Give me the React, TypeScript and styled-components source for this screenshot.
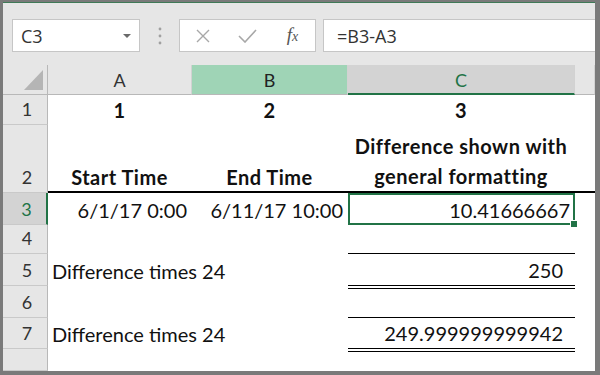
import React from 'react';
import styled, { createGlobalStyle, css } from 'styled-components';

const GREEN = '#217346';

const GlobalStyle = createGlobalStyle`
  html, body {
    margin: 0;
    padding: 0;
    background: #fff;
  }
  body {
    font-family: Lato, 'Open Sans', sans-serif;
  }
  * {
    box-sizing: border-box;
  }
`;

const Window = styled.div`
  width: 600px;
  height: 375px;
  display: flex;
  flex-direction: column;
  background: #e6e6e6;
  border-style: solid;
  border-color: #7a7a7a;
  border-width: 2px 5px 4px 3px;
  overflow: hidden;
`;

/* formula bar */

const FormulaBar = styled.div`
  height: 63px;
  flex-shrink: 0;
  display: flex;
  align-items: flex-start;
  padding: 16px 0 0 9px;
  border-top: 1px solid #3f7a57;
  font-family: 'Open Sans', Lato, sans-serif;
  font-size: 18px;
  color: #333;
`;

const NameBox = styled.div`
  width: 128px;
  height: 33px;
  display: flex;
  align-items: center;
  justify-content: space-between;
  padding: 0 8px;
  background: #fff;
  border: 1px solid #c6c6c6;
`;

const Caret = styled.span`
  width: 0;
  height: 0;
  border-left: 4px solid transparent;
  border-right: 4px solid transparent;
  border-top: 4px solid #6a6a6a;
`;

const Grip = styled.div`
  width: 39px;
  height: 33px;
  display: flex;
  align-items: center;
  justify-content: center;
`;

const FxButtons = styled.div`
  width: 137px;
  height: 33px;
  display: grid;
  grid-template-columns: repeat(3, 1fr);
  place-items: center;
  background: #fff;
  border: 1px solid #c6c6c6;
`;

const FxLabel = styled.span`
  font-family: 'Liberation Serif', 'DejaVu Serif', serif;
  font-style: italic;
  font-size: 19px;
  color: #555;
  line-height: 1;
  margin-top: -2px;

  & small {
    font-size: 14px;
  }
`;

const FormulaInput = styled.div`
  flex: 1;
  height: 33px;
  margin-left: 7px;
  display: flex;
  align-items: center;
  padding-left: 13px;
  background: #fff;
  border: 1px solid #c6c6c6;
  border-right: none;
`;

/* sheet */

const Sheet = styled.div`
  flex: 1;
  display: grid;
  grid-template-columns: 45px 144px 156px 227px 1fr;
  grid-template-rows: 30px 30px 68px 32px 29px 32px 32px 31px 1fr;
  background: #fff;
`;

const Corner = styled.div`
  display: flex;
  align-items: flex-end;
  justify-content: flex-end;
  padding: 0 4px 4px 0;
  background: #e6e6e6;
  border-right: 1px solid #b8b8b8;
  border-bottom: 1px solid #b8b8b8;
`;

type HeadState = 'ref' | 'active' | undefined;

const ColHead = styled.div<{ $state?: HeadState }>`
  display: flex;
  align-items: flex-end;
  justify-content: center;
  padding-bottom: 3px;
  font-size: 18px;
  color: #333;
  background: #e6e6e6;
  border-right: 1px solid #d2d2d2;
  border-bottom: 1px solid #b8b8b8;

  ${(p) =>
    p.$state === 'ref' &&
    css`
      background: #9fd4b6;
      color: #222;
    `}

  ${(p) =>
    p.$state === 'active' &&
    css`
      background: #d3d3d3;
      color: ${GREEN};
      padding-bottom: 2px;
      border-bottom: 2px solid ${GREEN};
    `}
`;

const RowHead = styled.div<{ $active?: boolean }>`
  display: flex;
  align-items: flex-end;
  justify-content: center;
  padding: 0 0 4px 4px;
  font-size: 18px;
  color: ${(p) => (p.$active ? GREEN : '#333')};
  background: ${(p) => (p.$active ? '#d3d3d3' : '#e6e6e6')};
  border-bottom: 1px solid #c9c9c9;
  border-right: ${(p) => (p.$active ? `2px solid ${GREEN}` : '1px solid #b8b8b8')};
`;

type Edge = 'thick' | 'single' | 'double' | undefined;
type Align = 'left' | 'center' | 'right';

const edges = {
  thick: css`
    border-bottom: 2px solid #000;
    padding-bottom: 2px;
  `,
  single: css`
    border-bottom: 1px solid #000;
  `,
  double: css`
    border-bottom: 4px double #000;
    margin-bottom: -3px;
  `,
};

const justify = { left: 'flex-start', center: 'center', right: 'flex-end' };

const Cell = styled.div<{
  $align?: Align;
  $bold?: boolean;
  $edge?: Edge;
  $selected?: boolean;
  $inset?: number;
}>`
  position: relative;
  min-width: 0;
  display: flex;
  align-items: flex-end;
  justify-content: ${(p) => justify[p.$align ?? 'left']};
  padding: 0 ${(p) => p.$inset ?? 5}px 3px 4px;
  font-size: 20px;
  font-weight: ${(p) => (p.$bold ? 700 : 400)};
  letter-spacing: ${(p) => (p.$bold ? '0.5px' : '0')};
  color: #111;
  white-space: nowrap;

  ${(p) => p.$edge && edges[p.$edge]}

  ${(p) =>
    p.$selected &&
    css`
      border: 2px solid ${GREEN};
      padding: 0 3px 1px 2px;
    `}
`;

const TwoLines = styled.span`
  display: block;
  text-align: center;
  line-height: 30px;
  margin-bottom: -2px;
`;

const FillHandle = styled.span`
  position: absolute;
  right: -4px;
  bottom: -4px;
  width: 6px;
  height: 6px;
  background: ${GREEN};
  box-shadow: -1px -1px 0 #fff;
`;

/* icons */

const GripDots = () => (
  <svg width="4" height="18" viewBox="0 0 4 18">
    <circle cx="2" cy="2" r="1.4" fill="#a0a0a0" />
    <circle cx="2" cy="9" r="1.4" fill="#a0a0a0" />
    <circle cx="2" cy="16" r="1.4" fill="#a0a0a0" />
  </svg>
);

const CancelIcon = () => (
  <svg width="14" height="14" viewBox="0 0 14 14">
    <path d="M1 1 L13 13 M13 1 L1 13" stroke="#a8a8a8" strokeWidth="1.4" fill="none" />
  </svg>
);

const EnterIcon = () => (
  <svg width="19" height="14" viewBox="0 0 19 14">
    <path d="M1 7 L7 13 L18 1" stroke="#a8a8a8" strokeWidth="1.6" fill="none" />
  </svg>
);

const CornerMark = () => (
  <svg width="19" height="20" viewBox="0 0 19 20">
    <polygon points="19,0 19,20 0,20" fill="#b5b5b5" />
  </svg>
);

/* data */

interface CellData {
  text?: string;
  lines?: string[];
  align?: Align;
  bold?: boolean;
  edge?: Edge;
  selected?: boolean;
  inset?: number;
}

interface RowData {
  label: string;
  active?: boolean;
  edge?: Edge;
  cells: CellData[];
}

const rows: RowData[] = [
  {
    label: '1',
    cells: [
      { text: '1', align: 'center', bold: true },
      { text: '2', align: 'center', bold: true },
      { text: '3', align: 'center', bold: true },
    ],
  },
  {
    label: '2',
    edge: 'thick',
    cells: [
      { text: 'Start Time', align: 'center', bold: true },
      { text: 'End Time', align: 'center', bold: true },
      { lines: ['Difference shown with', 'general formatting'], align: 'center', bold: true },
    ],
  },
  {
    label: '3',
    active: true,
    cells: [
      { text: '6/1/17 0:00', align: 'right' },
      { text: '6/11/17 10:00', align: 'right' },
      { text: '10.41666667', align: 'right', selected: true },
    ],
  },
  {
    label: '4',
    cells: [{}, {}, { edge: 'single' }],
  },
  {
    label: '5',
    cells: [{ text: 'Difference times 24' }, {}, { text: '250', align: 'right', edge: 'double', inset: 12 }],
  },
  {
    label: '6',
    cells: [{}, {}, { edge: 'single' }],
  },
  {
    label: '7',
    cells: [
      { text: 'Difference times 24' },
      {},
      { text: '249.999999999942', align: 'right', edge: 'double', inset: 12 },
    ],
  },
  {
    label: '',
    cells: [{}, {}, {}],
  },
];

const columns: { name: string; state?: HeadState }[] = [
  { name: 'A' },
  { name: 'B', state: 'ref' },
  { name: 'C', state: 'active' },
];

const App = () => {
  return (
    <>
      <GlobalStyle />
      <Window>
        <FormulaBar>
          <NameBox>
            <span>C3</span>
            <Caret />
          </NameBox>
          <Grip>
            <GripDots />
          </Grip>
          <FxButtons>
            <CancelIcon />
            <EnterIcon />
            <FxLabel>
              f<small>x</small>
            </FxLabel>
          </FxButtons>
          <FormulaInput>=B3-A3</FormulaInput>
        </FormulaBar>

        <Sheet>
          <Corner>
            <CornerMark />
          </Corner>
          {columns.map((c) => (
            <ColHead key={c.name} $state={c.state}>
              {c.name}
            </ColHead>
          ))}
          <ColHead />

          {rows.map((row, r) => (
            <React.Fragment key={r}>
              <RowHead $active={row.active}>{row.label}</RowHead>
              {row.cells.map((cell, i) => (
                <Cell
                  key={i}
                  $align={cell.align}
                  $bold={cell.bold}
                  $edge={cell.edge ?? row.edge}
                  $selected={cell.selected}
                  $inset={cell.inset}
                >
                  {cell.lines ? (
                    <TwoLines>
                      {cell.lines.map((l) => (
                        <div key={l}>{l}</div>
                      ))}
                    </TwoLines>
                  ) : (
                    cell.text
                  )}
                  {cell.selected && <FillHandle />}
                </Cell>
              ))}
              <Cell $edge={row.edge} />
            </React.Fragment>
          ))}
        </Sheet>
      </Window>
    </>
  );
};

export default App;
